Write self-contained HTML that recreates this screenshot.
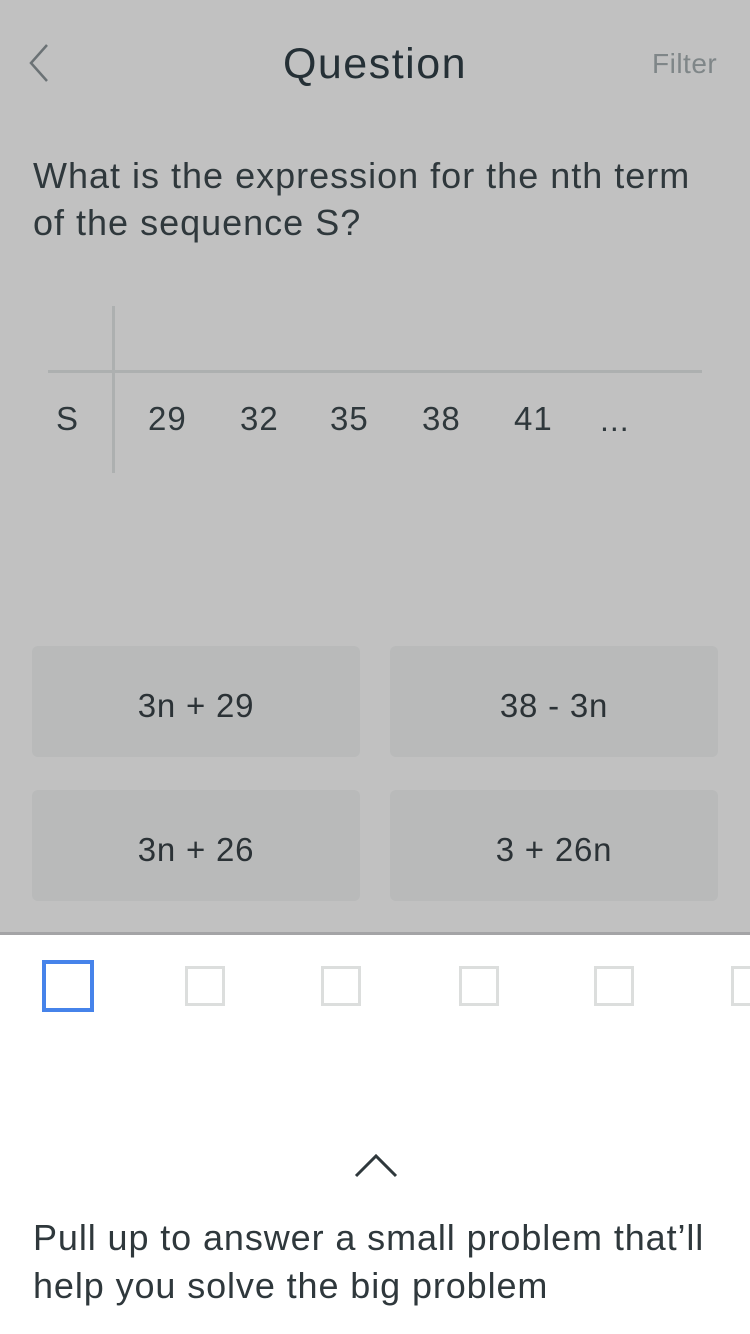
<!DOCTYPE html>
<html><head><meta charset="utf-8"><style>
*{margin:0;padding:0;box-sizing:border-box}
body{width:750px;height:1334px;overflow:hidden;font-family:"Liberation Sans",sans-serif;background:#fff;position:relative}
.top{position:absolute;left:0;top:0;width:750px;height:932px;background:#c1c1c1}
.t{position:absolute;white-space:nowrap}
.btn{position:absolute;width:328px;height:111px;background:#b9baba;border-radius:6px;font-size:33px;color:#2b3236;text-align:center;line-height:119px;letter-spacing:0.8px}
.sq{position:absolute;top:966px;width:40px;height:40px;border:3px solid #dcdedd}
.n{position:absolute;top:400px;font-size:33px;color:#2f383c;letter-spacing:1px}
</style></head><body>
<div class="top">
<svg class="t" style="left:26px;top:42px" width="26" height="42"><path d="M21 3 L5 21 L21 39" stroke="#6b7275" stroke-width="2.5" fill="none"/></svg>
<div class="t" style="left:0;width:750px;text-align:center;top:40px;font-size:43px;color:#253036;letter-spacing:1.5px">Question</div>
<div class="t" style="left:652px;top:48px;font-size:28px;color:#7f8688;letter-spacing:0.5px">Filter</div>
<div class="t" style="left:33px;top:152px;font-size:36px;line-height:47px;color:#2f383c;letter-spacing:1px">What is the expression for the nth term<br>of the sequence S?</div>
<div class="t" style="left:112px;top:306px;width:3px;height:167px;background:#adb0b0"></div>
<div class="t" style="left:48px;top:370px;width:654px;height:3px;background:#adb0b0"></div>
<div class="n" style="left:56px">S</div>
<div class="n" style="left:148px">29</div>
<div class="n" style="left:240px">32</div>
<div class="n" style="left:330px">35</div>
<div class="n" style="left:422px">38</div>
<div class="n" style="left:514px">41</div>
<div class="n" style="left:600px;font-size:32px;top:402px">...</div>
<div class="btn" style="left:32px;top:646px">3n + 29</div>
<div class="btn" style="left:390px;top:646px">38 - 3n</div>
<div class="btn" style="left:32px;top:790px">3n + 26</div>
<div class="btn" style="left:390px;top:790px">3 + 26n</div>
</div>
<div class="t" style="left:0;top:932px;width:750px;height:3px;background:#a4a4a6"></div>
<div class="t" style="left:42px;top:960px;width:52px;height:52px;border:4px solid #4683ea"></div>
<div class="sq" style="left:185px"></div>
<div class="sq" style="left:321px"></div>
<div class="sq" style="left:459px"></div>
<div class="sq" style="left:594px"></div>
<div class="sq" style="left:731px"></div>
<svg class="t" style="left:352px;top:1148px" width="48" height="32"><path d="M4 28 L24 8 L44 28" stroke="#2f383c" stroke-width="3" fill="none"/></svg>
<div class="t" style="left:33px;top:1214px;font-size:36px;line-height:48px;color:#2f383c;letter-spacing:0.9px">Pull up to answer a small problem that’ll<br>help you solve the big problem</div>
</body></html>
